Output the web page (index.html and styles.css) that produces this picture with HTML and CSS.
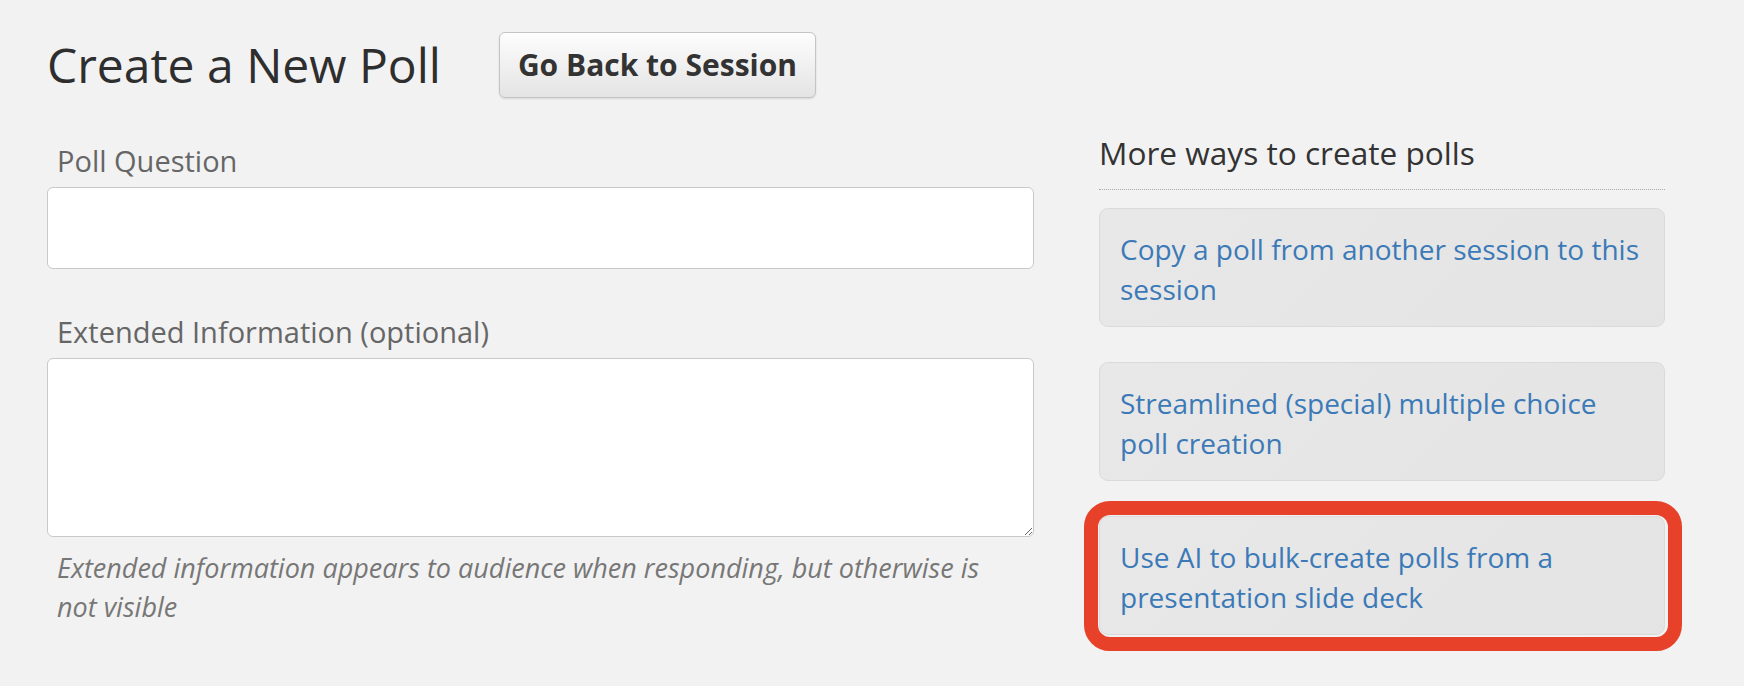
FILE: index.html
```html
<!DOCTYPE html>
<html lang="en">
<head>
<meta charset="utf-8">
<title>Create a New Poll</title>
<link rel="stylesheet" href="styles.css">
</head>
<body>
<div class="page">
  <header class="header">
    <h1 class="title">Create a New Poll</h1>
    <button class="btn" type="button">Go Back to Session</button>
  </header>
  <div class="layout">
    <form class="form">
      <div class="group">
        <label class="label" for="q">Poll Question</label>
        <input class="control input" id="q" type="text">
      </div>
      <div class="group">
        <label class="label" for="ext">Extended Information (optional)</label>
        <textarea class="control textarea" id="ext"></textarea>
        <p class="help">Extended information appears to audience when responding, but otherwise is not visible</p>
      </div>
    </form>
    <aside class="side">
      <h2 class="side-title">More ways to create polls</h2>
      <a class="card" href="#">Copy a poll from another session to this session</a>
      <a class="card" href="#">Streamlined (special) multiple choice poll creation</a>
      <a class="card card-highlight" href="#">Use AI to bulk-create polls from a presentation slide deck</a>
    </aside>
  </div>
</div>
</body>
</html>
```

FILE: styles.css
```css
html, body {
  margin: 0;
  background: #f2f2f2;
  font-family: "Open Sans", "Liberation Sans", sans-serif;
}

.page {
  padding: 32px 0 0 47px;
}

.header {
  display: flex;
  align-items: center;
  height: 66px;
}

.title {
  margin: 0 58px 0 0;
  font-size: 48px;
  font-weight: 400;
  line-height: 66px;
  color: #2e2e2e;
}

.btn {
  height: 66px;
  padding: 0 18px;
  border: 1px solid #c4c4c4;
  border-radius: 6px;
  background: linear-gradient(#fdfdfd, #e4e4e4);
  box-shadow: 0 1px 2px rgba(0, 0, 0, 0.12);
  font-family: "Open Sans", "Liberation Sans", sans-serif;
  font-size: 30px;
  font-weight: 700;
  line-height: 64px;
  color: #333;
}

.layout {
  display: flex;
  align-items: flex-start;
  gap: 65px;
}

.form {
  width: 987px;
  padding-top: 43px;
}

.group {
  margin-bottom: 43px;
}

.label {
  display: block;
  margin-bottom: 6px;
  padding-left: 10px;
  font-size: 29px;
  line-height: 40px;
  color: #666;
}

.control {
  display: block;
  width: 100%;
  box-sizing: border-box;
  margin: 0;
  border: 1px solid #c9c9c9;
  border-radius: 6px;
  background: #fff;
}

.input {
  height: 82px;
}

.textarea {
  height: 179px;
}

.help {
  margin: 11px 0 0;
  padding: 0 22px 0 10px;
  font-size: 27px;
  font-style: italic;
  line-height: 39px;
  color: #777;
}

.side {
  width: 566px;
  padding-top: 35px;
}

.side-title {
  margin: 0 0 18px;
  padding-bottom: 16px;
  border-bottom: 1px dotted #aaa;
  font-size: 31.6px;
  font-weight: 400;
  line-height: 40px;
  color: #333;
}

.card {
  display: block;
  position: relative;
  margin-bottom: 35px;
  padding: 20px 20px 17px;
  border: 1px solid #dadada;
  border-radius: 9px;
  background: linear-gradient(135deg, #e8e8e8, #e4e4e4);
  font-size: 28px;
  line-height: 40px;
  color: #3c7ab7;
  text-decoration: none;
}

.card-highlight::after {
  content: "";
  position: absolute;
  top: -16px;
  left: -16px;
  right: -18px;
  bottom: -17px;
  border: 14px solid #e8412a;
  border-radius: 26px;
  pointer-events: none;
}
```
